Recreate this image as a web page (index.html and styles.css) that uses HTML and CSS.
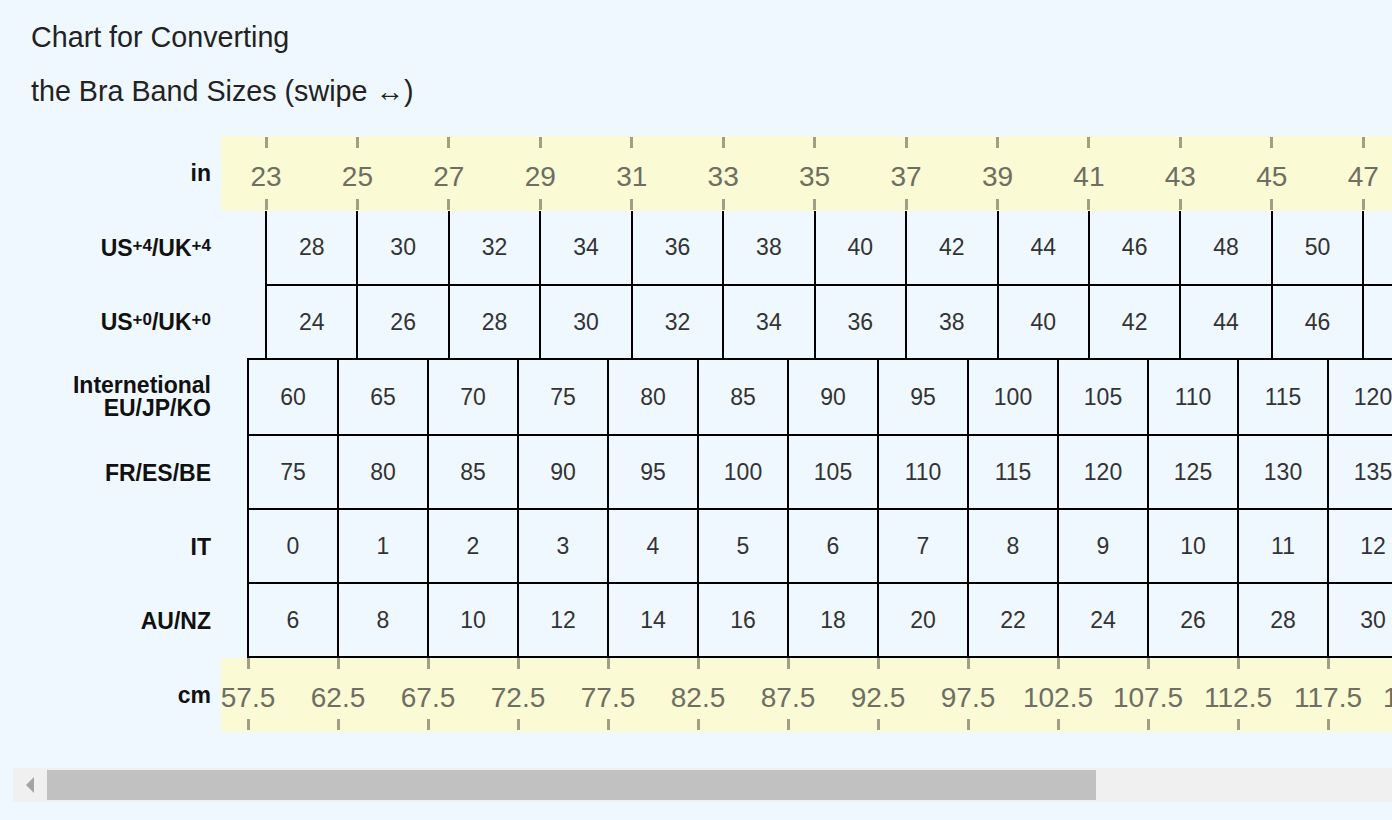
FILE: index.html
```html
<!DOCTYPE html>
<html lang="en">
<head>
<meta charset="utf-8">
<title>Bra Band Size Conversion Chart</title>
<link rel="stylesheet" href="styles.css">
</head>
<body>
<div class="page">
  <h1 class="title">Chart for Converting<br>the Bra Band Sizes (swipe ↔)</h1>
  <div class="scroller">
    <div class="chart">
      <div class="row row-in">
        <div class="label"><span>in</span></div>
        <div class="ruler">
          <div class="ticks ticks-in">
            <div class="tick"><span>23</span></div><div class="tick"><span>25</span></div><div class="tick"><span>27</span></div><div class="tick"><span>29</span></div><div class="tick"><span>31</span></div><div class="tick"><span>33</span></div><div class="tick"><span>35</span></div><div class="tick"><span>37</span></div><div class="tick"><span>39</span></div><div class="tick"><span>41</span></div><div class="tick"><span>43</span></div><div class="tick"><span>45</span></div><div class="tick"><span>47</span></div><div class="tick"><span>49</span></div><div class="tick"><span>51</span></div><div class="tick"><span>53</span></div><div class="tick"><span>55</span></div><div class="tick"><span>57</span></div>
          </div>
        </div>
      </div>

      <div class="row row-us4">
        <div class="label"><span>US<sup>+4</sup>/UK<sup>+4</sup></span></div>
        <div class="cells cells-us">
          <div class="cell">28</div><div class="cell">30</div><div class="cell">32</div><div class="cell">34</div><div class="cell">36</div><div class="cell">38</div><div class="cell">40</div><div class="cell">42</div><div class="cell">44</div><div class="cell">46</div><div class="cell">48</div><div class="cell">50</div><div class="cell">52</div><div class="cell">54</div><div class="cell">56</div><div class="cell">58</div><div class="cell">60</div>
        </div>
      </div>

      <div class="row row-us0">
        <div class="label"><span>US<sup>+0</sup>/UK<sup>+0</sup></span></div>
        <div class="cells cells-us">
          <div class="cell">24</div><div class="cell">26</div><div class="cell">28</div><div class="cell">30</div><div class="cell">32</div><div class="cell">34</div><div class="cell">36</div><div class="cell">38</div><div class="cell">40</div><div class="cell">42</div><div class="cell">44</div><div class="cell">46</div><div class="cell">48</div><div class="cell">50</div><div class="cell">52</div><div class="cell">54</div><div class="cell">56</div>
        </div>
      </div>

      <div class="row row-intl">
        <div class="label"><span>Internetional<br>EU/JP/KO</span></div>
        <div class="cells cells-cm">
          <div class="cell">60</div><div class="cell">65</div><div class="cell">70</div><div class="cell">75</div><div class="cell">80</div><div class="cell">85</div><div class="cell">90</div><div class="cell">95</div><div class="cell">100</div><div class="cell">105</div><div class="cell">110</div><div class="cell">115</div><div class="cell">120</div><div class="cell">125</div><div class="cell">130</div><div class="cell">135</div><div class="cell">140</div>
        </div>
      </div>

      <div class="row row-cm">
        <div class="label"><span>FR/ES/BE</span></div>
        <div class="cells cells-cm">
          <div class="cell">75</div><div class="cell">80</div><div class="cell">85</div><div class="cell">90</div><div class="cell">95</div><div class="cell">100</div><div class="cell">105</div><div class="cell">110</div><div class="cell">115</div><div class="cell">120</div><div class="cell">125</div><div class="cell">130</div><div class="cell">135</div><div class="cell">140</div><div class="cell">145</div><div class="cell">150</div><div class="cell">155</div>
        </div>
      </div>

      <div class="row row-cm">
        <div class="label"><span>IT</span></div>
        <div class="cells cells-cm">
          <div class="cell">0</div><div class="cell">1</div><div class="cell">2</div><div class="cell">3</div><div class="cell">4</div><div class="cell">5</div><div class="cell">6</div><div class="cell">7</div><div class="cell">8</div><div class="cell">9</div><div class="cell">10</div><div class="cell">11</div><div class="cell">12</div><div class="cell">13</div><div class="cell">14</div><div class="cell">15</div><div class="cell">16</div>
        </div>
      </div>

      <div class="row row-cm">
        <div class="label"><span>AU/NZ</span></div>
        <div class="cells cells-cm">
          <div class="cell">6</div><div class="cell">8</div><div class="cell">10</div><div class="cell">12</div><div class="cell">14</div><div class="cell">16</div><div class="cell">18</div><div class="cell">20</div><div class="cell">22</div><div class="cell">24</div><div class="cell">26</div><div class="cell">28</div><div class="cell">30</div><div class="cell">32</div><div class="cell">34</div><div class="cell">36</div><div class="cell">38</div>
        </div>
      </div>

      <div class="row row-cmruler">
        <div class="label"><span>cm</span></div>
        <div class="ruler ruler-cm">
          <div class="ticks ticks-cm">
            <div class="tick"><span>57.5</span></div><div class="tick"><span>62.5</span></div><div class="tick"><span>67.5</span></div><div class="tick"><span>72.5</span></div><div class="tick"><span>77.5</span></div><div class="tick"><span>82.5</span></div><div class="tick"><span>87.5</span></div><div class="tick"><span>92.5</span></div><div class="tick"><span>97.5</span></div><div class="tick"><span>102.5</span></div><div class="tick"><span>107.5</span></div><div class="tick"><span>112.5</span></div><div class="tick"><span>117.5</span></div><div class="tick"><span>122.5</span></div><div class="tick"><span>127.5</span></div><div class="tick"><span>132.5</span></div><div class="tick"><span>137.5</span></div><div class="tick"><span>142.5</span></div>
          </div>
        </div>
      </div>
    </div>
  </div>
  <div class="scrollbar">
    <div class="sb-button"><span class="sb-arrow"></span></div>
    <div class="sb-thumb"></div>
  </div>
</div>
</body>
</html>
```

FILE: styles.css
```css
html, body {
  margin: 0;
  background: #f0f8ff;
  overflow: hidden;
}

body {
  font-family: "Liberation Sans", Arial, sans-serif;
  color: #222;
}

.page {
  padding: 10px 0 0 13px;
}

.title {
  margin: 0;
  padding-left: 18px;
  font-size: 28.7px;
  font-weight: normal;
  line-height: 54px;
  color: #222;
}

.scroller {
  width: 1420px;
  margin-top: 18px;
  overflow: hidden;
}

/* scrollbar */
.scrollbar {
  display: flex;
  width: 1420px;
  height: 34px;
  background: #f0f0f0;
}

.sb-button {
  flex: none;
  width: 34px;
  height: 34px;
  display: flex;
  align-items: center;
  justify-content: center;
}

.sb-arrow {
  width: 0;
  height: 0;
  border-top: 8px solid transparent;
  border-bottom: 8px solid transparent;
  border-right: 8px solid #a3a3a3;
}

.sb-thumb {
  flex: none;
  width: 1049px;
  margin: 2px 0;
  background: #c1c1c1;
}

.chart {
  width: max-content;
  padding-bottom: 36px;
}

.row {
  display: flex;
  align-items: stretch;
}

.label {
  flex: none;
  width: 198px;
  margin-right: 10px;
  display: flex;
  align-items: center;
  justify-content: flex-end;
  text-align: right;
  font-size: 23px;
  font-weight: bold;
  line-height: 23px;
  color: #111;
}

.label sup {
  font-size: 17px;
  line-height: 0;
  vertical-align: 5px;
}

/* rulers */
.ruler {
  flex: none;
  width: 1620px;
  height: 75px;
  background: #fafad5;
  display: flex;
}

.ruler-cm {
  height: 74px;
}

.ticks {
  display: flex;
}

.ticks-in {
  margin-left: -0.72px;
}

.ticks-cm {
  margin-left: -18px;
}

.tick {
  flex: none;
  display: flex;
  flex-direction: column;
  align-items: center;
  justify-content: space-between;
  padding: 1px 0;
  font-size: 28px;
  line-height: 32px;
  color: #6e6e62;
}

.ticks-in .tick {
  width: 91.44px;
}

.ticks-cm .tick {
  width: 90px;
  padding: 0 0 2px;
}

.tick::before,
.tick::after {
  content: "";
  width: 3px;
  height: 11px;
  background: #a09f86;
}

.tick span {
  margin-top: 7px;
}

/* cells */
.cells {
  display: flex;
  flex: none;
}

.cells-us {
  margin-left: 44px;
}

.cells-cm {
  margin-left: 26px;
}

.cell {
  flex: none;
  box-sizing: border-box;
  display: flex;
  align-items: center;
  justify-content: center;
  border-left: 2px solid #000;
  font-size: 23px;
  color: #333;
}

.cell:last-child {
  border-right: 2px solid #000;
}

.cells-us .cell {
  width: 91.44px;
}

.cells-cm .cell {
  width: 90px;
  height: 74px;
  border-bottom: 2px solid #000;
}

.row-us4 .cell {
  height: 75px;
  border-bottom: 2px solid #000;
}

.row-us0 .cell {
  height: 72px;
}

.row-intl .cell {
  height: 78px;
  border-top: 2px solid #000;
}
```
